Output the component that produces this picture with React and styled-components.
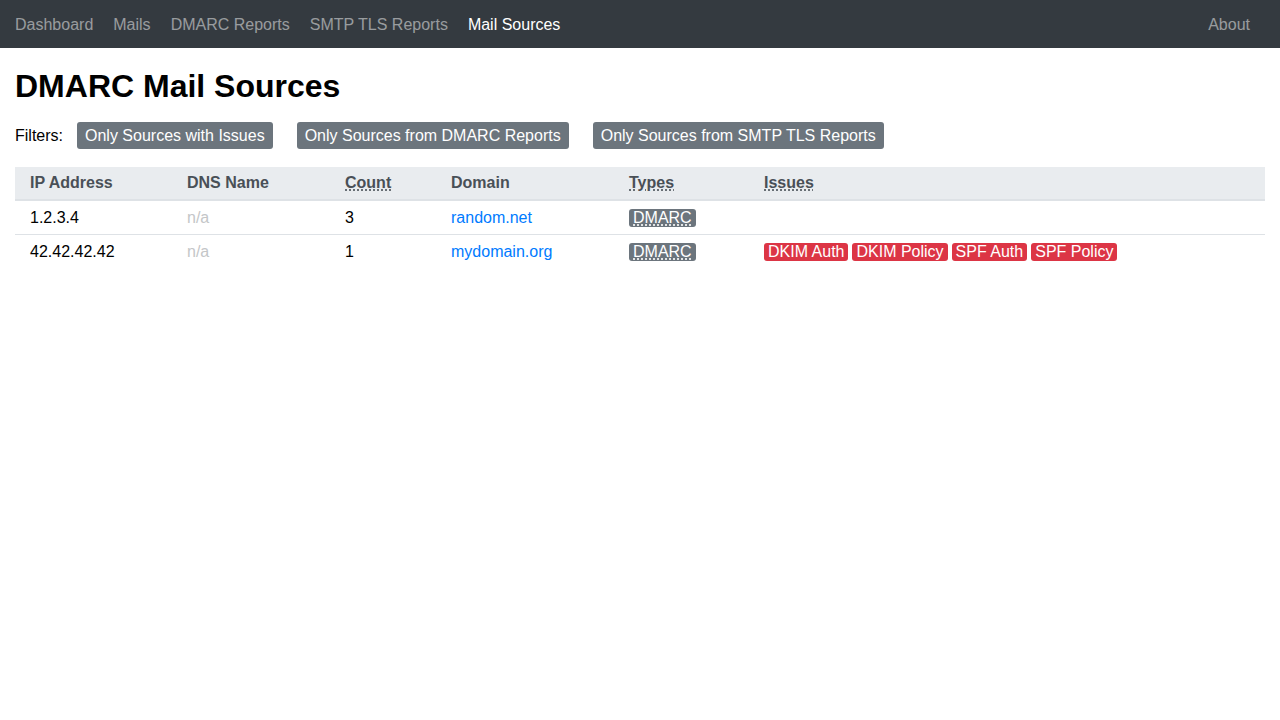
import React from "react";
import styled, { createGlobalStyle } from "styled-components";

const GlobalStyle = createGlobalStyle`
  body {
    margin: 0;
    font-family: "Liberation Sans", Arial, sans-serif;
    font-size: 16px;
    color: #000;
    background: #fff;
  }
`;

const NavBar = styled.nav`
  box-sizing: border-box;
  display: flex;
  align-items: center;
  height: 48px;
  background-color: #343a40;
  padding: 2px 20px 0 5px;
`;

const NavLink = styled.a`
  padding: 0 10px;
  font-size: 16px;
  line-height: 20px;
  color: ${(p) => (p.$active ? "#ffffff" : "rgba(255, 255, 255, 0.5)")};
  text-decoration: none;
  cursor: pointer;
  margin-left: ${(p) => (p.$right ? "auto" : "0")};
`;

const Main = styled.main`
  padding: 19px 15px;
`;

const Title = styled.h1`
  margin: 0 0 17px;
  font-size: 32px;
  line-height: 38px;
  font-weight: 700;
`;

const Filters = styled.div`
  display: flex;
  align-items: center;
  gap: 24px;
  margin-bottom: 18px;
`;

const FilterLabel = styled.span`
  margin-right: -10px;
`;

const FilterButton = styled.button`
  font-family: inherit;
  font-size: 16px;
  line-height: 19px;
  padding: 4px 8px;
  border: none;
  border-radius: 3px;
  background-color: #6c757d;
  color: #fff;
  cursor: pointer;
`;

const Table = styled.table`
  width: 100%;
  border-collapse: collapse;
  table-layout: fixed;
`;

const Th = styled.th`
  box-sizing: border-box;
  width: ${(p) => p.$w || "auto"};
  text-align: left;
  font-weight: 700;
  color: #495057;
  background-color: #e9ecef;
  padding: 4px 15px;
  line-height: 24px;
  border-bottom: 2px solid #dee2e6;
`;

const Td = styled.td`
  padding: 5px 15px 4px;
  line-height: 24px;
  vertical-align: middle;
  white-space: nowrap;
  border-bottom: ${(p) => (p.$last ? "none" : "1px solid #dee2e6")};
  color: ${(p) => (p.$muted ? "#c4c6c8" : "#000")};
`;

const Abbr = styled.abbr`
  text-decoration: underline dotted;
  text-underline-offset: 2px;
  cursor: help;
`;

const DomainLink = styled.a`
  color: #007bff;
  text-decoration: none;
`;

const Badges = styled.div`
  display: flex;
  gap: 4px;
`;

const Badge = styled.span`
  display: inline-block;
  padding: 0 4px;
  font-size: 16px;
  line-height: 18px;
  border-radius: 3px;
  white-space: nowrap;
  color: #fff;
  background-color: ${(p) => (p.$variant === "danger" ? "#dc3545" : "#6c757d")};
`;

const rows = [
  { ip: "1.2.3.4", dns: "n/a", count: 3, domain: "random.net", types: ["DMARC"], issues: [] },
  {
    ip: "42.42.42.42",
    dns: "n/a",
    count: 1,
    domain: "mydomain.org",
    types: ["DMARC"],
    issues: ["DKIM Auth", "DKIM Policy", "SPF Auth", "SPF Policy"],
  },
];

export default function App() {
  return (
    <>
      <GlobalStyle />
      <NavBar>
        <NavLink>Dashboard</NavLink>
        <NavLink>Mails</NavLink>
        <NavLink>DMARC Reports</NavLink>
        <NavLink>SMTP TLS Reports</NavLink>
        <NavLink $active>Mail Sources</NavLink>
        <NavLink $right>About</NavLink>
      </NavBar>
      <Main>
        <Title>DMARC Mail Sources</Title>
        <Filters>
          <FilterLabel>Filters:</FilterLabel>
          <FilterButton>Only Sources with Issues</FilterButton>
          <FilterButton>Only Sources from DMARC Reports</FilterButton>
          <FilterButton>Only Sources from SMTP TLS Reports</FilterButton>
        </Filters>
        <Table>
          <thead>
            <tr>
              <Th $w="157px">IP Address</Th>
              <Th $w="158px">DNS Name</Th>
              <Th $w="106px"><Abbr title="Number of reports">Count</Abbr></Th>
              <Th $w="178px">Domain</Th>
              <Th $w="135px"><Abbr title="Report types">Types</Abbr></Th>
              <Th><Abbr title="Detected issues">Issues</Abbr></Th>
            </tr>
          </thead>
          <tbody>
            {rows.map((r, i) => {
              const last = i === rows.length - 1;
              return (
                <tr key={r.ip}>
                  <Td $last={last}>{r.ip}</Td>
                  <Td $last={last} $muted>{r.dns}</Td>
                  <Td $last={last}>{r.count}</Td>
                  <Td $last={last}><DomainLink>{r.domain}</DomainLink></Td>
                  <Td $last={last}>
                    <Badges>
                      {r.types.map((t) => (
                        <Badge key={t}><Abbr title="DMARC report">{t}</Abbr></Badge>
                      ))}
                    </Badges>
                  </Td>
                  <Td $last={last}>
                    <Badges>
                      {r.issues.map((t) => (
                        <Badge key={t} $variant="danger">{t}</Badge>
                      ))}
                    </Badges>
                  </Td>
                </tr>
              );
            })}
          </tbody>
        </Table>
      </Main>
    </>
  );
}
